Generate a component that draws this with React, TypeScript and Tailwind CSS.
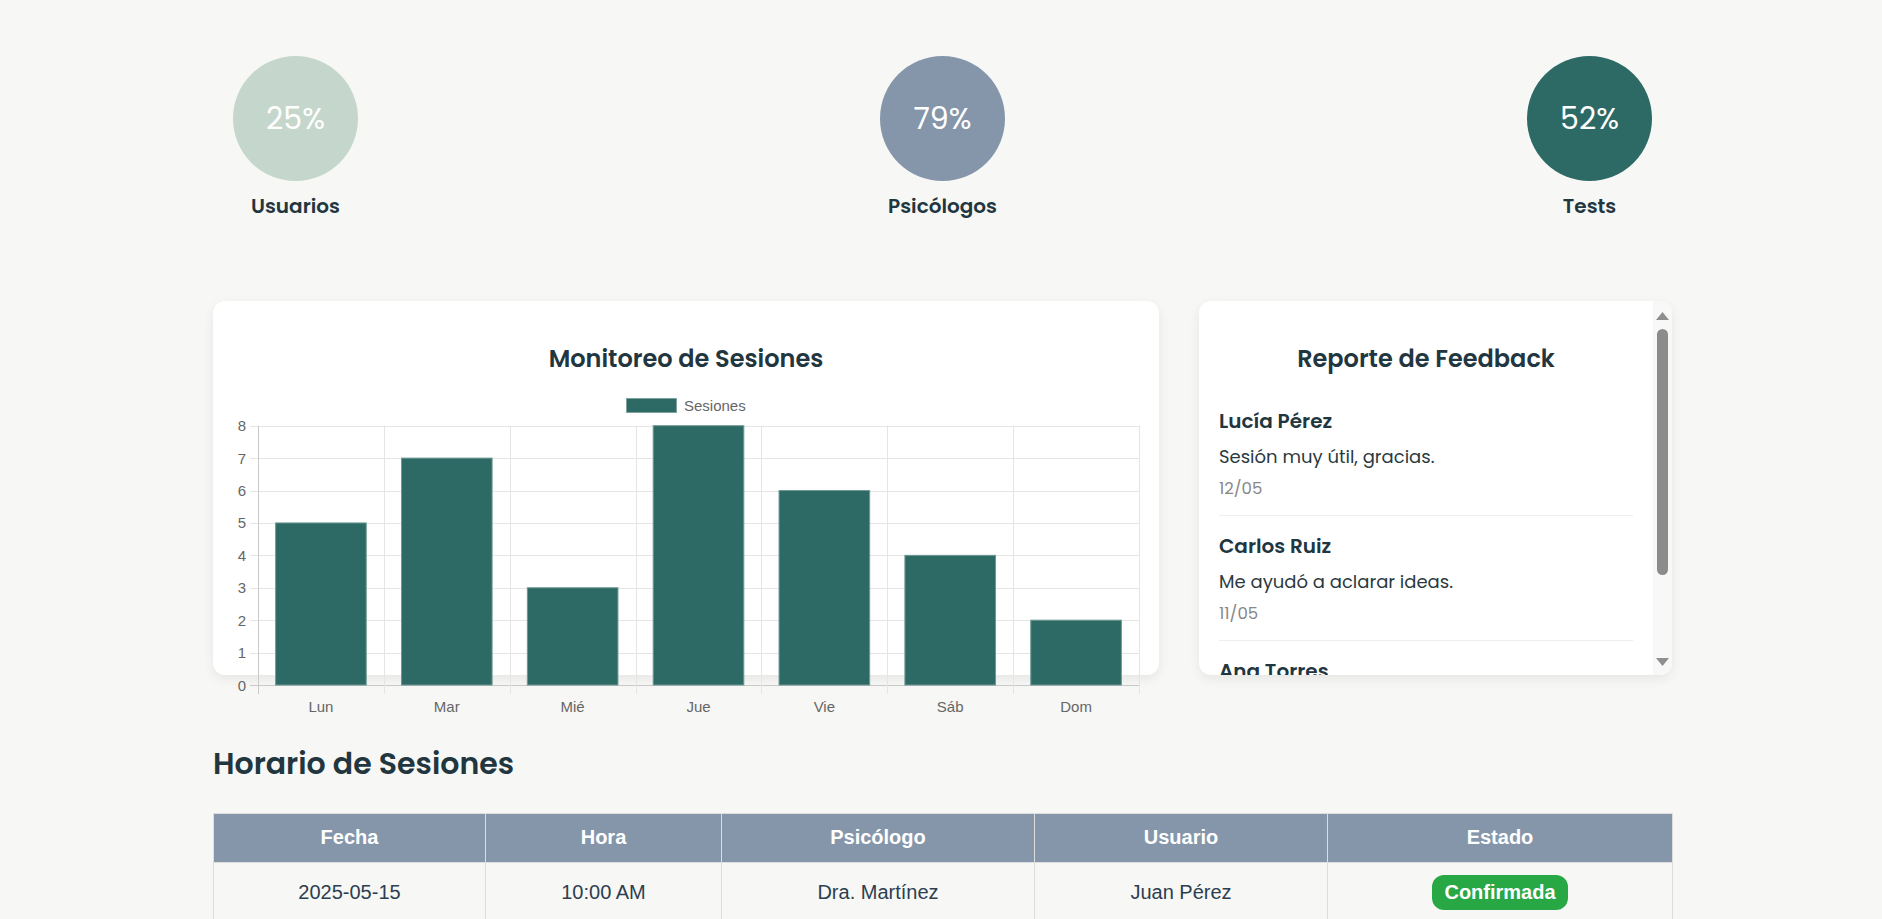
import React from "react";

const data = [5, 7, 3, 8, 6, 4, 2];
const days = ["Lun", "Mar", "Mié", "Jue", "Vie", "Sáb", "Dom"];

function BarChart() {
  const X0 = 25;
  const X1 = 906;
  const cw = (X1 - X0) / 7;
  const Y = (v: number) => 297 - v * 32.4125;
  const font = "'Liberation Sans', Arial, sans-serif";
  return (
    <svg width="910" height="340" className="block overflow-visible">
      {/* legend */}
      <rect x="393.5" y="10.5" width="50" height="14" fill="#2e6a65" stroke="#7fa39f" strokeWidth="1" />
      <text x="451" y="22.5" fontSize="15" fill="#666" fontFamily={font}>
        Sesiones
      </text>
      {/* horizontal grid */}
      {[0, 1, 2, 3, 4, 5, 6, 7, 8].map((v) => (
        <g key={v}>
          <line
            x1="17"
            x2={X1}
            y1={Math.round(Y(v)) + 0.5}
            y2={Math.round(Y(v)) + 0.5}
            stroke={v === 0 ? "#c9c9c9" : "#e5e5e5"}
            strokeWidth="1"
          />
          <text x="13" y={Y(v) + 5.5} fontSize="15" fill="#666" textAnchor="end" fontFamily={font}>
            {v}
          </text>
        </g>
      ))}
      {/* vertical grid */}
      {Array.from({ length: 8 }).map((_, i) => (
        <line
          key={i}
          x1={Math.round(X0 + i * cw) + 0.5}
          x2={Math.round(X0 + i * cw) + 0.5}
          y1={Y(8)}
          y2={Y(0) + 9}
          stroke={i === 0 ? "#c9c9c9" : "#e5e5e5"}
          strokeWidth="1"
        />
      ))}
      {/* bars */}
      {data.map((v, i) => {
        const x = X0 + i * cw + cw * 0.14;
        const w = cw * 0.72;
        return (
          <rect
            key={i}
            x={x}
            y={Y(v)}
            width={w}
            height={Y(0) - Y(v)}
            fill="#2e6a65"
            stroke="#6f9893"
            strokeWidth="1"
          />
        );
      })}
      {days.map((d, i) => (
        <text
          key={d}
          x={X0 + i * cw + cw / 2}
          y="324"
          fontSize="15"
          fill="#666"
          textAnchor="middle"
          fontFamily={font}
        >
          {d}
        </text>
      ))}
    </svg>
  );
}

function Stat({ value, label, color }: { value: string; label: string; color: string }) {
  return (
    <div className="flex flex-col items-center p-[20px]">
      <div className={`flex h-[125px] w-[125px] items-center justify-center rounded-full ${color}`}>
        <span className="text-[30px] font-normal leading-none text-white">{value}</span>
      </div>
      <div className="mt-[10px] text-[20px] font-semibold leading-[30px] text-[#22363f]">{label}</div>
    </div>
  );
}

const feedback = [
  { name: "Lucía Pérez", text: "Sesión muy útil, gracias.", date: "12/05" },
  { name: "Carlos Ruiz", text: "Me ayudó a aclarar ideas.", date: "11/05" },
  { name: "Ana Torres", text: "Excelente atención.", date: "10/05" },
  { name: "Pedro Gómez", text: "Muy profesional.", date: "09/05" },
];

function Arrow({ up }: { up?: boolean }) {
  return (
    <svg width="13" height="8" className="block">
      <polygon points={up ? "6.5,0 13,8 0,8" : "0,0 13,0 6.5,8"} fill="#8f8f8f" />
    </svg>
  );
}

const rows = [
  ["2025-05-15", "10:00 AM", "Dra. Martínez", "Juan Pérez", "Confirmada"],
  ["2025-05-16", "11:30 AM", "Dr. López", "María Gómez", "Pendiente"],
  ["2025-05-17", "03:00 PM", "Dra. Sánchez", "Luis Torres", "Confirmada"],
];

export default function App() {
  return (
    <div className="h-[919px] overflow-hidden bg-[#f7f7f5] font-[family-name:Poppins,Inter,sans-serif] text-[#22363f]">
      <div className="ml-[213px] w-[1459px] pt-[36px]">
        {/* stats */}
        <div className="flex justify-between">
          <Stat value="25%" label="Usuarios" color="bg-[#c5d7cc]" />
          <Stat value="79%" label="Psicólogos" color="bg-[#8596ab]" />
          <Stat value="52%" label="Tests" color="bg-[#2e6a65]" />
        </div>

        {/* cards */}
        <div className="mt-[60px] grid grid-cols-[946px_473px] gap-[40px]">
          <div className="h-[374px] rounded-[12px] bg-white px-[20px] pt-[40px] shadow-[0_4px_12px_rgba(0,0,0,0.07)]">
            <h2 className="text-center text-[24px] font-semibold leading-[36px] text-[#22363f]">
              Monitoreo de Sesiones
            </h2>
            <div className="mt-[11px]">
              <BarChart />
            </div>
          </div>

          <div className="flex h-[374px] overflow-hidden rounded-[12px] bg-white shadow-[0_4px_12px_rgba(0,0,0,0.07)]">
            <div className="flex-1 overflow-hidden px-[20px] pt-[40px]">
              <h2 className="text-center text-[24px] font-semibold leading-[36px] text-[#22363f]">
                Reporte de Feedback
              </h2>
              <div className="mt-[13.5px]">
                {feedback.map((f) => (
                  <div key={f.name} className="border-b border-[#eeeeee] pb-[15px] pt-[17px]">
                    <div className="text-[20px] font-semibold leading-[27px] text-[#22363f]">{f.name}</div>
                    <div className="mt-[8px] text-[18px] leading-[27px] text-[#2a3a40]">{f.text}</div>
                    <div className="mt-[8px] text-[16.5px] leading-[22px] text-[#888888]">{f.date}</div>
                  </div>
                ))}
              </div>
            </div>
            <div className="flex w-[19px] flex-col items-center bg-[#f8f8f8] pt-[11px]">
              <Arrow up />
              <div className="mt-[9px] h-[246px] w-[11px] rounded-full bg-[#8c8c8c]" />
              <div className="flex-1" />
              <div className="mb-[9px]">
                <Arrow />
              </div>
            </div>
          </div>
        </div>

        {/* schedule */}
        <h2 className="mt-[65.5px] text-[30px] font-semibold leading-[45px] text-[#22363f]">Horario de Sesiones</h2>
        <table className="mt-[27px] w-full table-fixed border-collapse font-[family-name:'Liberation_Sans',Arial,sans-serif] text-[20px]">
          <colgroup>
            <col className="w-[272px]" />
            <col className="w-[236px]" />
            <col className="w-[313px]" />
            <col className="w-[293px]" />
            <col className="w-[345px]" />
          </colgroup>
          <thead>
            <tr className="bg-[#8596ab] text-white">
              {["Fecha", "Hora", "Psicólogo", "Usuario", "Estado"].map((h) => (
                <th key={h} className="border border-[#dddddd] px-[12.5px] py-[12.5px] text-center font-bold leading-[23px]">
                  {h}
                </th>
              ))}
            </tr>
          </thead>
          <tbody>
            {rows.map((r) => (
              <tr key={r[0]}>
                {r.slice(0, 4).map((c, i) => (
                  <td key={i} className="border border-[#dddddd] px-[12.5px] py-[12.5px] text-center leading-[23px] text-[#2c3e50]">
                    {c}
                  </td>
                ))}
                <td className="border border-[#dddddd] px-[12.5px] py-[12.5px] text-center leading-[23px]">
                  <span
                    className={`inline-block rounded-[12px] px-[12.5px] py-[6px] font-bold text-white ${
                      r[4] === "Confirmada" ? "bg-[#28a745]" : "bg-[#e0a800]"
                    }`}
                  >
                    {r[4]}
                  </span>
                </td>
              </tr>
            ))}
          </tbody>
        </table>
      </div>
    </div>
  );
}
